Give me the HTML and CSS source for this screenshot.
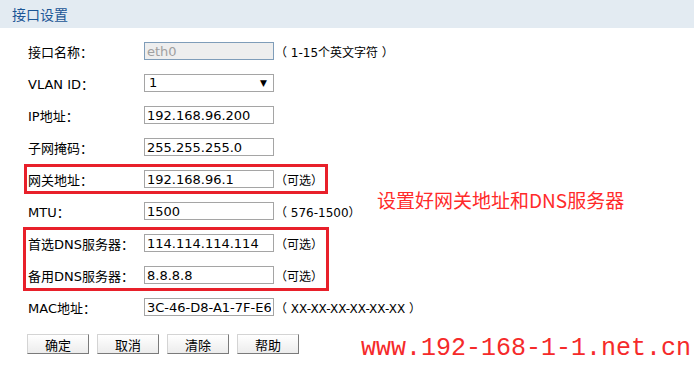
FILE: index.html
```html
<!DOCTYPE html>
<html lang="zh-CN">

<head>
  <meta charset="UTF-8" />
  <meta name="viewport" content="width=device-width, initial-scale=1.0" />
  <title>接口设置</title>
  <link rel="stylesheet" href="styles.css">
</head>

<body>
  <div class="panel-title">接口设置</div>

  <div class="content">
    <form class="form" id="form">
      <div class="row">
        <label>接口名称：</label>
        <input type="text" class="field" value="eth0" disabled />
        <span class="hint">（ 1-15个英文字符 ）</span>
      </div>

      <div class="row">
        <label>VLAN ID：</label>
        <div class="select">1</div>
      </div>

      <div class="row">
        <label>IP地址：</label>
        <input type="text" class="field" value="192.168.96.200" />
      </div>

      <div class="row">
        <label>子网掩码：</label>
        <input type="text" class="field" value="255.255.255.0" />
      </div>

      <div class="mark mark-single">
        <div class="row">
          <label>网关地址：</label>
          <input type="text" class="field" value="192.168.96.1" />
          <span class="hint">（可选）</span>
        </div>
      </div>

      <div class="row">
        <label>MTU：</label>
        <input type="text" class="field" value="1500" />
        <span class="hint">（ 576-1500）</span>
      </div>

      <div class="mark">
        <div class="row">
          <label>首选DNS服务器：</label>
          <input type="text" class="field" value="114.114.114.114" />
          <span class="hint">（可选）</span>
        </div>
        <div class="row">
          <label>备用DNS服务器：</label>
          <input type="text" class="field" value="8.8.8.8" />
          <span class="hint">（可选）</span>
        </div>
      </div>

      <div class="row">
        <label>MAC地址：</label>
        <input type="text" class="field" value="3C-46-D8-A1-7F-E6" />
        <span class="hint">（ XX-XX-XX-XX-XX-XX ）</span>
      </div>

      <div class="buttons">
        <button type="button">确定</button>
        <button type="button">取消</button>
        <button type="button">清除</button>
        <button type="button">帮助</button>
      </div>
    </form>

    <div class="notes">
      <div class="note">设置好网关地址和DNS服务器</div>
      <div class="watermark">www.192-168-1-1.net.cn</div>
    </div>
  </div>
</body>

</html>
```

FILE: styles.css
```css
html,
body {
  margin: 0;
  padding: 0;
}

body {
  font-family: "DejaVu Sans", "Noto Sans CJK SC", sans-serif;
  font-size: 13px;
  color: #000;
  background: #fff;
  width: 694px;
  height: 367px;
  overflow: hidden;
}

.panel-title {
  height: 28px;
  line-height: 28px;
  padding-left: 12px;
  background: #e3ebf2;
  color: #1b5696;
  font-family: "Noto Sans CJK SC", sans-serif;
  font-size: 14px;
}

.content {
  display: flex;
}

.form {
  width: 306px;
  margin-left: 23px;
  padding-top: 7px;
}

.row {
  display: flex;
  align-items: center;
  height: 32px;
  padding-left: 5px;
  white-space: nowrap;
}

.row label {
  width: 116px;
  flex: none;
  font-family: "DejaVu Sans", "Noto Sans CJK SC", sans-serif;
}

.field,
.select {
  width: 130px;
  height: 18px;
  box-sizing: border-box;
  border: 1px solid #a5a5a5;
  padding: 0 2px;
  margin: 0;
  font-family: "DejaVu Sans", sans-serif;
  font-size: 13px;
  color: #000;
  background: #fff;
  flex: none;
}

.field:disabled {
  border-color: #7f9db9;
  background: #eeeeee;
  color: #a0a0a0;
}

.select {
  position: relative;
  line-height: 16px;
  padding-left: 4px;
}

.select::after {
  content: '▼';
  position: absolute;
  right: 6px;
  top: 0;
  font-size: 9px;
}

.hint {
  margin-left: 1px;
  font-family: "DejaVu Sans", "Noto Sans CJK SC", sans-serif;
  font-size: 12px;
}

/* red annotation boxes */
.mark {
  outline: 3px solid #e8202a;
  outline-offset: -3px;
}

.mark-single {
  outline-offset: -4px;
}

.buttons {
  display: flex;
  gap: 8px;
  margin-top: 11px;
  padding-left: 4px;
}

.buttons button {
  width: 62px;
  height: 20px;
  padding: 0;
  border: 1px solid;
  border-color: #d4d4d4 #7a7a7a #7a7a7a #d4d4d4;
  background: linear-gradient(#ffffff, #ececec);
  font-family: "Noto Sans CJK SC", sans-serif;
  font-size: 13px;
  color: #000;
  cursor: pointer;
}

.notes {
  flex: 1;
  display: flex;
  flex-direction: column;
}

.note {
  margin-top: 159px;
  margin-left: 48px;
  color: #ff2a2a;
  font-family: "Noto Sans CJK SC", sans-serif;
  font-size: 19px;
  line-height: 26px;
}

.watermark {
  margin-top: 122px;
  margin-left: 32px;
  color: #f52a2a;
  font-family: "Liberation Mono", monospace;
  font-size: 25px;
  line-height: 28px;
}
```
